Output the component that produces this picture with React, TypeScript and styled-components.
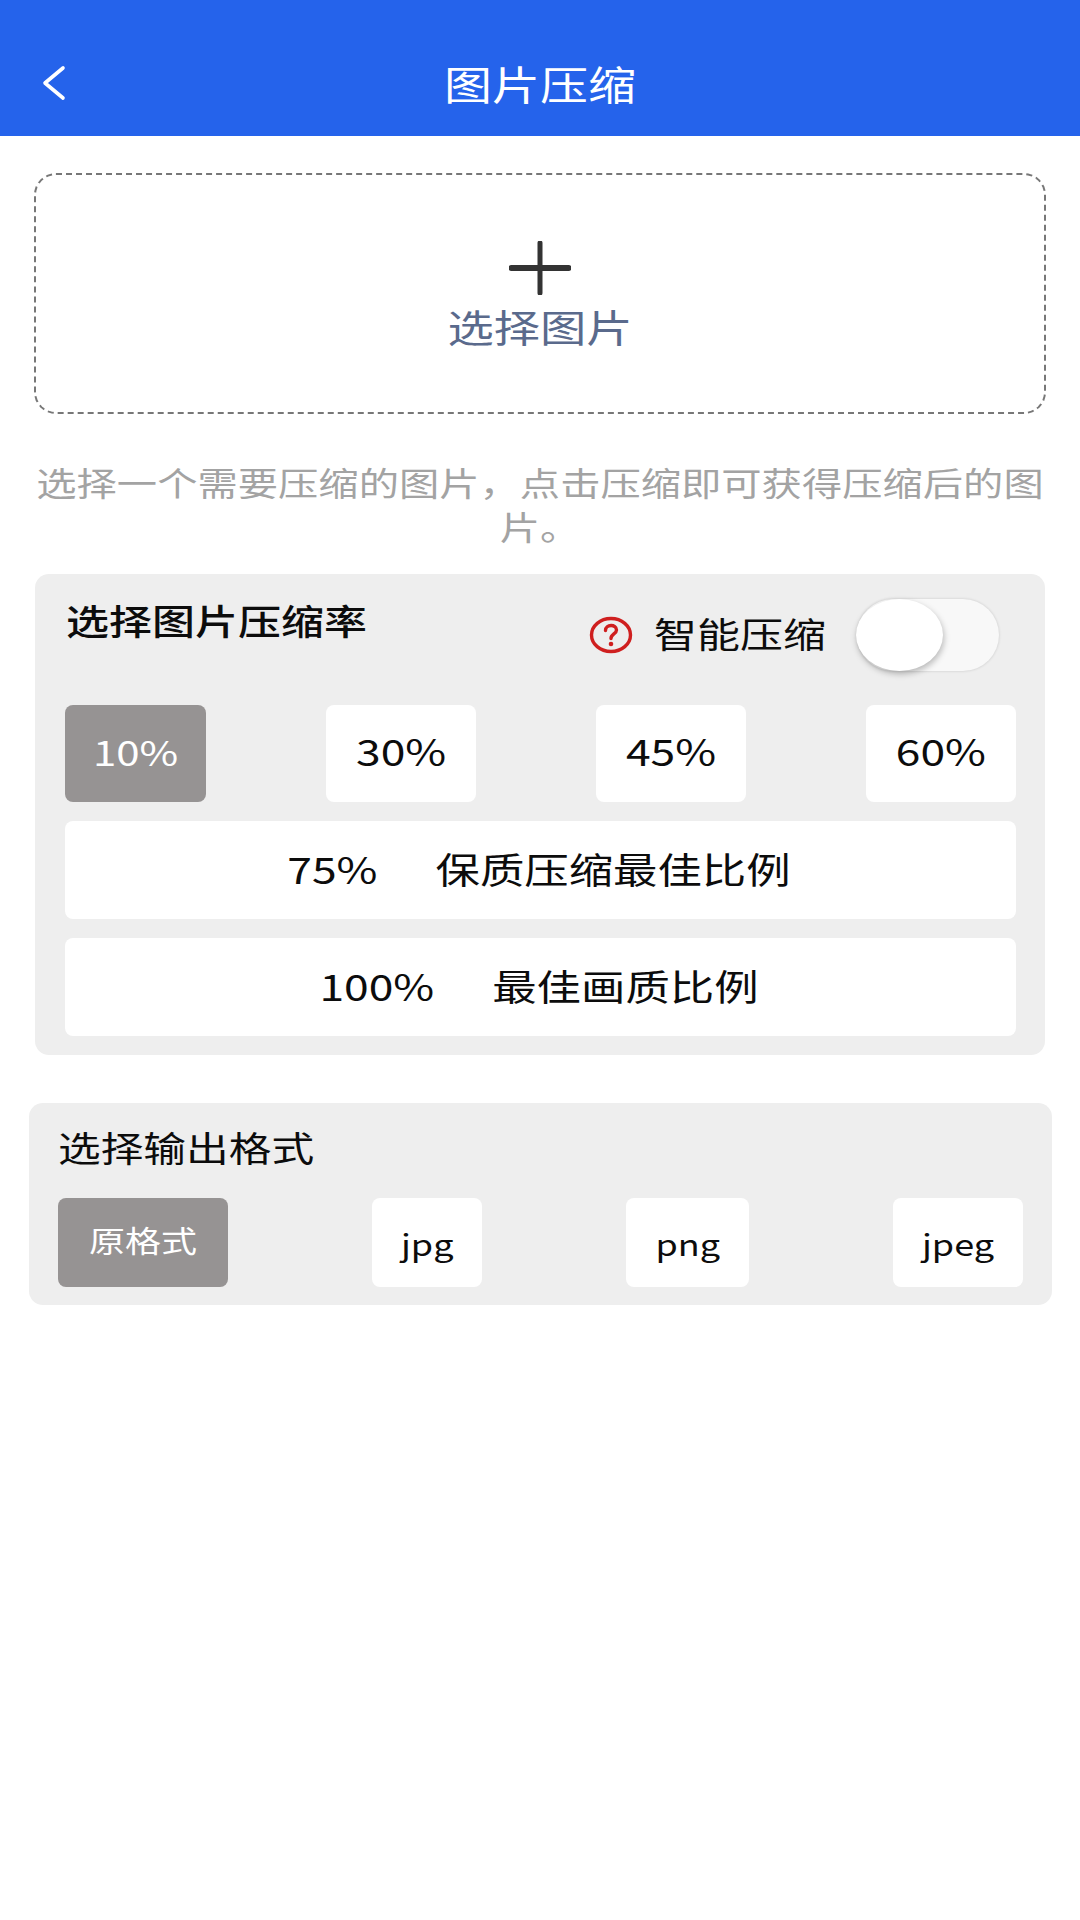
import styled, { createGlobalStyle } from 'styled-components';

const GlobalStyle = createGlobalStyle`
  html, body {
    margin: 0;
    background: #fff;
    font-family: "Noto Sans CJK SC", "Noto Sans", sans-serif;
  }
  * { box-sizing: border-box; }
`;

const rates = ['10%', '30%', '45%', '60%'];
const formats = ['原格式', 'jpg', 'png', 'jpeg'];

export default function App() {
  return (
    <>
      <GlobalStyle />
      <Page>
        <Header>
          <BackButton aria-label="back">
            <svg width="26" height="36" viewBox="0 0 26 36" fill="none">
              <path d="M22 3 L4 18 L22 33" stroke="#fff" strokeWidth="3.6" strokeLinecap="round" strokeLinejoin="round" />
            </svg>
          </BackButton>
          <Title><Squash>图片压缩</Squash></Title>
        </Header>

        <UploadBox>
          <svg width="62" height="54" viewBox="0 0 62 54" fill="none">
            <path d="M2.5 27 H59.5" stroke="#333" strokeWidth="6" strokeLinecap="round" />
            <path d="M31 2 V52" stroke="#333" strokeWidth="5" strokeLinecap="round" />
          </svg>
          <UploadLabel><Squash>选择图片</Squash></UploadLabel>
        </UploadBox>

        <Hint>
          <HintText>选择一个需要压缩的图片，点击压缩即可获得压缩后的图片。</HintText>
        </Hint>

        <RatePanel>
          <RateHead>
            <RateTitle><Squash>选择图片压缩率</Squash></RateTitle>
            <SmartGroup>
              <svg width="44" height="38" viewBox="0 0 44 38" fill="none">
                <ellipse cx="22" cy="19" rx="19.5" ry="16.5" stroke="#cf1f1f" strokeWidth="3.4" />
                <path d="M16.5 14.5 C16.5 8 27.5 8 27.5 14 C27.5 18 22 18 22 22.5" stroke="#cf1f1f" strokeWidth="3.4" strokeLinecap="round" />
                <circle cx="22" cy="28" r="2.3" fill="#cf1f1f" />
              </svg>
              <SmartLabel><Squash>智能压缩</Squash></SmartLabel>
              <ToggleTrack>
                <ToggleKnob />
              </ToggleTrack>
            </SmartGroup>
          </RateHead>
          <ChipRow>
            {rates.map((rate, i) => (
              <RateChip key={rate} $active={i === 0}><Squash>{rate}</Squash></RateChip>
            ))}
          </ChipRow>
          <WideChip>
            <Squash>75%</Squash>
            <Squash>保质压缩最佳比例</Squash>
          </WideChip>
          <WideChip>
            <Squash>100%</Squash>
            <Squash>最佳画质比例</Squash>
          </WideChip>
        </RatePanel>

        <FormatPanel>
          <FormatTitle><Squash>选择输出格式</Squash></FormatTitle>
          <ChipRow>
            {formats.map((format, i) => (
              <FormatChip key={format} $active={i === 0}><Squash>{format}</Squash></FormatChip>
            ))}
          </ChipRow>
        </FormatPanel>
      </Page>
    </>
  );
}

const Page = styled.div`
  display: flex;
  flex-direction: column;
  width: 1080px;
  min-height: 1920px;
  background: #fff;
`;

/* the reference is stretched sideways, so text is set at its width and squeezed in height */
const Squash = styled.span`
  display: inline-block;
  transform: scaleY(0.82);
`;

const Header = styled.header`
  display: grid;
  grid-template-columns: 1fr auto 1fr;
  align-items: center;
  height: 136px;
  padding: 30px 0 0 41px;
  background: #2563eb;
`;

const BackButton = styled.div`
  display: flex;
  align-items: center;
  height: 40px;
`;

const Title = styled.h1`
  margin: 0 41px 0 0;
  font-size: 48px;
  font-weight: 400;
  line-height: 56px;
  color: #fff;
`;

const UploadBox = styled.div`
  display: flex;
  flex-direction: column;
  align-items: center;
  height: 241px;
  margin: 37px 34px 0;
  padding-top: 66px;
  border: 2px dashed #777;
  border-radius: 22px;
`;

const UploadLabel = styled.div`
  margin-top: 3px;
  font-size: 46.3px;
  line-height: 56px;
  color: #5a6a8c;
`;

const Hint = styled.div`
  height: 89px;
  margin: 46px 34px 0;
`;

const HintText = styled.p`
  margin: 0;
  font-size: 40.3px;
  line-height: 53.6px;
  text-align: center;
  color: #a3a3a3;
  transform: scaleY(0.82);
  transform-origin: top center;
`;

const RatePanel = styled.section`
  display: flex;
  flex-direction: column;
  gap: 19px;
  margin: 25px 35px 0;
  padding: 0 29px 19px 30px;
  border-radius: 14px;
  background: #eeeeee;
`;

const RateHead = styled.div`
  display: flex;
  justify-content: space-between;
  align-items: flex-start;
  height: 112px;
`;

const RateTitle = styled.h2`
  margin: 20px 0 0 1px;
  font-size: 43px;
  font-weight: 500;
  line-height: 50px;
  color: #0c0c0c;
`;

const SmartGroup = styled.div`
  display: flex;
  align-items: center;
  margin: 25px 17px 0 0;
`;

const SmartLabel = styled.span`
  margin: -7px 31px 0 21px;
  font-size: 43px;
  line-height: 50px;
  color: #0c0c0c;
`;

const ToggleTrack = styled.div`
  display: flex;
  width: 142px;
  height: 72px;
  border-radius: 36px;
  background: #f8f8f8;
  box-shadow: 0 0 3px rgba(0, 0, 0, 0.16);
`;

const ToggleKnob = styled.div`
  width: 87px;
  height: 72px;
  margin-left: -1px;
  border-radius: 50%;
  background: #fff;
  box-shadow: 1px 3px 6px rgba(0, 0, 0, 0.26);
`;

const ChipRow = styled.div`
  display: flex;
  justify-content: space-between;
`;

const RateChip = styled.div<{ $active?: boolean }>`
  display: flex;
  align-items: center;
  justify-content: center;
  height: 97px;
  padding: 0 ${(p) => (p.$active ? '28px' : '30px')} 6px;
  border-radius: 8px;
  font-size: ${(p) => (p.$active ? '42px' : '44.4px')};
  color: ${(p) => (p.$active ? '#fff' : '#0c0c0c')};
  background: ${(p) => (p.$active ? '#969393' : '#fff')};
`;

const WideChip = styled.div`
  display: flex;
  align-items: center;
  justify-content: center;
  gap: 58px;
  height: 98px;
  padding: 0 3px 4px 0;
  border-radius: 8px;
  font-size: 44.4px;
  color: #0c0c0c;
  background: #fff;
`;

const FormatPanel = styled.section`
  display: flex;
  flex-direction: column;
  height: 202px;
  margin: 48px 28px 0 29px;
  padding: 0 29px 0;
  border-radius: 14px;
  background: #eeeeee;
`;

const FormatTitle = styled.h2`
  height: 95px;
  margin: 0;
  padding-top: 18px;
  font-size: 42.7px;
  font-weight: 400;
  line-height: 50px;
  color: #0c0c0c;
`;

const FormatChip = styled.div<{ $active?: boolean }>`
  display: flex;
  align-items: center;
  justify-content: center;
  height: 89px;
  padding: 0 ${(p) => (p.$active ? '31px' : '29px')} ${(p) => (p.$active ? '7px' : '0')};
  border-radius: 8px;
  font-size: 36px;
  color: ${(p) => (p.$active ? '#fff' : '#0c0c0c')};
  background: ${(p) => (p.$active ? '#969393' : '#fff')};
`;
